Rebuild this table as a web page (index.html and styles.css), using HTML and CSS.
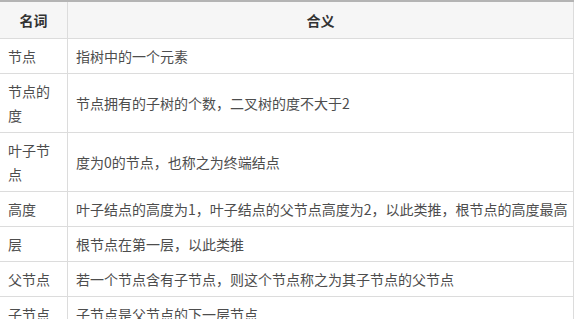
FILE: index.html
```html
<!DOCTYPE html>
<html lang="zh">
<head>
<meta charset="utf-8">
<link rel="stylesheet" href="styles.css">
</head>
<body>
<table class="terms">
  <colgroup><col class="c-name"><col class="c-def"></colgroup>
  <thead>
    <tr><th>名词</th><th>合义</th></tr>
  </thead>
  <tbody>
    <tr><td>节点</td><td>指树中的一个元素</td></tr>
    <tr><td>节点的度</td><td>节点拥有的子树的个数，二叉树的度不大于2</td></tr>
    <tr><td>叶子节点</td><td>度为0的节点，也称之为终端结点</td></tr>
    <tr><td>高度</td><td>叶子结点的高度为1，叶子结点的父节点高度为2，以此类推，根节点的高度最高</td></tr>
    <tr><td>层</td><td>根节点在第一层，以此类推</td></tr>
    <tr><td>父节点</td><td>若一个节点含有子节点，则这个节点称之为其子节点的父节点</td></tr>
    <tr><td>子节点</td><td>子节点是父节点的下一层节点</td></tr>
  </tbody>
</table>
</body>
</html>
```

FILE: styles.css
```css
html, body {
  margin: 0;
  padding: 0;
  background: #fff;
}
body {
  font-family: "Noto Sans CJK SC", "Noto Sans", sans-serif;
  font-size: 14px;
  color: #4d4d4d;
}
.terms {
  border-collapse: collapse;
  table-layout: fixed;
  width: 575px;
  margin-left: -1px;
  border-top: 2px solid #b4b4b4;
}
.c-name { width: 68px; }
.terms th,
.terms td {
  border: 1px solid #dcdcdc;
  padding: 5px 8px 5px 8px;
  line-height: 24px;
  vertical-align: middle;
  text-align: left;
}
.terms td + td {
  padding-right: 1px;
}
.terms th {
  background: #f6f6f6;
  color: #333;
  font-weight: bold;
  text-align: center;
  padding: 6px 8px 6px 8px;
  border-top: 2px solid #b4b4b4;
}
```
